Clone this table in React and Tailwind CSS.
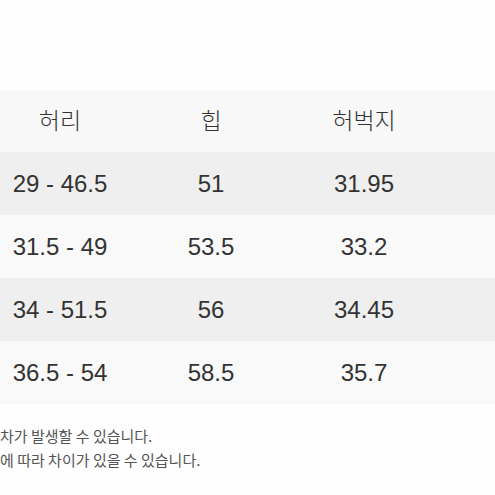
import React from "react";

const rows = [
  { waist: "29 - 46.5", hip: "51", thigh: "31.95", bg: "bg-[#efefef]" },
  { waist: "31.5 - 49", hip: "53.5", thigh: "33.2", bg: "bg-[#f9f9f9]" },
  { waist: "34 - 51.5", hip: "56", thigh: "34.45", bg: "bg-[#efefef]" },
  { waist: "36.5 - 54", hip: "58.5", thigh: "35.7", bg: "bg-[#f9f9f9]" },
];

const SizeRow = ({ cells, className, height }) => (
  <div className={`grid grid-cols-[120px_182px_124px_1fr] items-center ${height} ${className}`}>
    {cells.map((cell, index) => (
      <div key={index} className="text-center">
        {cell}
      </div>
    ))}
    <div />
  </div>
);

const App = () => {
  return (
    <div
      className="w-[495px] h-[495px] overflow-hidden bg-[#fefefe] text-[#333] pt-[90px]"
      style={{ fontFamily: '"Liberation Sans", "Noto Sans CJK KR", sans-serif' }}
    >
      <div>
        <SizeRow
          cells={["허리", "힙", "허벅지"]}
          className="bg-[#f8f8f8] font-light text-[23px]"
          height="h-[62px]"
        />
        {rows.map((row, index) => (
          <SizeRow
            key={index}
            cells={[row.waist, row.hip, row.thigh]}
            className={`${row.bg} text-[24px]`}
            height="h-[63px]"
          />
        ))}
      </div>

      <div
        className="mt-[20px] text-[15px] leading-[24px] text-[#555]"
        style={{ fontFamily: '"Noto Sans CJK KR", sans-serif' }}
      >
        <p>차가 발생할 수 있습니다.</p>
        <p>에 따라 차이가 있을 수 있습니다.</p>
      </div>
    </div>
  );
};

export default App;
